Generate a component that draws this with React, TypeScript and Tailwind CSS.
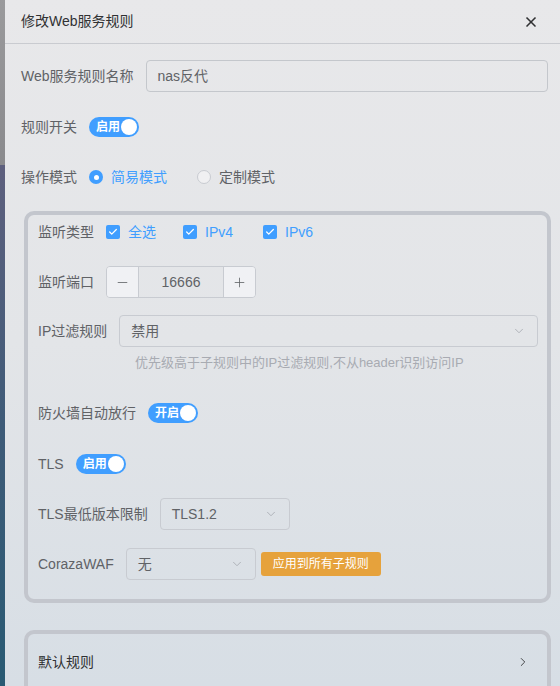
import { X, ChevronDown, ChevronRight, Minus, Plus, Check } from "lucide-react";

const font = { fontFamily: '"Liberation Sans", "Noto Sans CJK SC", sans-serif' };

function Switch({ text }: { text: string }) {
  return (
    <div className="flex items-center justify-between w-[50px] h-[20px] rounded-full bg-[#409eff] pl-[7px] pr-[2px]">
      <span className="text-[12px] font-bold text-white leading-none">{text}</span>
      <span className="w-[16px] h-[16px] rounded-full bg-white"></span>
    </div>
  );
}

function CheckBox({ label, ml }: { label: string; ml: string }) {
  return (
    <div className={`flex items-center ${ml}`}>
      <span className="w-[14px] h-[14px] rounded-[2px] bg-[#409eff] flex items-center justify-center">
        <Check size={10} strokeWidth={3} className="text-white" />
      </span>
      <span className="ml-[8px] text-[14px] text-[#409eff]">{label}</span>
    </div>
  );
}

function Select({ value, w }: { value: string; w: string }) {
  return (
    <div className={`flex items-center justify-between h-[32px] ${w} border border-[#c8cbd1] rounded-[4px] pl-[11px] pr-[11px]`}>
      <span className="text-[14px] text-[#606266]">{value}</span>
      <ChevronDown size={14} strokeWidth={1.5} className="text-[#a8abb2]" />
    </div>
  );
}

function Label({ children }: { children: string }) {
  return <span className="text-[14px] text-[#606266] whitespace-nowrap">{children}</span>;
}

export default function App() {
  return (
    <div className="flex w-[560px] h-[686px] overflow-hidden" style={font}>
      <div className="w-[5px] h-full flex flex-col shrink-0">
        <div className="h-[165px] bg-gradient-to-b from-[#9a9a9c] to-[#8a8a8d]"></div>
        <div className="flex-1 bg-gradient-to-b from-[#5e607e] via-[#3e5b78] to-[#285a73]"></div>
      </div>
      <div className="flex-1 flex flex-col bg-gradient-to-b from-[#e8e8ea] via-[#e3e5e8] to-[#d7dee5]">
        <div className="h-[44px] shrink-0 flex items-center justify-between pl-[16px] pr-[21px] border-b border-[#c9cbd0]">
          <span className="text-[14px] text-[#303133]">修改Web服务规则</span>
          <X size={16} strokeWidth={2.5} className="text-[#303133]" />
        </div>

        <div className="flex flex-col pl-[16px] pr-[12px]">
          <div className="flex items-center h-[32px] mt-[16px]">
            <Label>Web服务规则名称</Label>
            <div className="ml-[12px] flex-1 h-[32px] border border-[#c4c7cc] rounded-[4px] flex items-center pl-[11px]">
              <span className="text-[14px] text-[#606266]">nas反代</span>
            </div>
          </div>

          <div className="flex items-center h-[32px] mt-[19px]">
            <Label>规则开关</Label>
            <div className="ml-[12px]">
              <Switch text="启用" />
            </div>
          </div>

          <div className="flex items-center h-[32px] mt-[18px]">
            <Label>操作模式</Label>
            <span className="ml-[12px] w-[14px] h-[14px] rounded-full bg-[#409eff] flex items-center justify-center">
              <span className="w-[5px] h-[5px] rounded-full bg-white"></span>
            </span>
            <span className="ml-[8px] text-[14px] text-[#409eff]">简易模式</span>
            <span className="ml-[30px] w-[14px] h-[14px] rounded-full border border-[#c8cbd1] bg-[#f0f0f2]"></span>
            <span className="ml-[8px] text-[14px] text-[#606266]">定制模式</span>
          </div>

          <div className="mt-[18px] ml-[3px] mr-[-3px] border-4 border-[#c3c6cd] rounded-[10px] pl-[10px] pr-[9px] pt-[1px] pb-[19px] flex flex-col">
            <div className="flex items-center h-[32px]">
              <Label>监听类型</Label>
              <CheckBox label="全选" ml="ml-[12px]" />
              <CheckBox label="IPv4" ml="ml-[27px]" />
              <CheckBox label="IPv6" ml="ml-[30px]" />
            </div>

            <div className="flex items-center h-[32px] mt-[18px]">
              <Label>监听端口</Label>
              <div className="ml-[12px] flex h-[32px] w-[150px] border border-[#c8cbd1] rounded-[4px] overflow-hidden">
                <div className="w-[32px] flex items-center justify-center bg-[#f0f1f4] border-r border-[#c8cbd1]">
                  <Minus size={15} strokeWidth={1.3} className="text-[#606266]" />
                </div>
                <div className="flex-1 flex items-center justify-center text-[14px] text-[#606266]">16666</div>
                <div className="w-[32px] flex items-center justify-center bg-[#f0f1f4] border-l border-[#c8cbd1]">
                  <Plus size={15} strokeWidth={1.3} className="text-[#606266]" />
                </div>
              </div>
            </div>

            <div className="flex items-center h-[32px] mt-[17px]">
              <Label>IP过滤规则</Label>
              <div className="ml-[12px] flex-1">
                <Select value="禁用" w="w-full" />
              </div>
            </div>

            <div className="h-[20px] mt-[6px] pl-[97px] text-[13px] leading-[20px] text-[#a8abb2] whitespace-nowrap">
              优先级高于子规则中的IP过滤规则,不从header识别访问IP
            </div>

            <div className="flex items-center h-[32px] mt-[24px]">
              <Label>防火墙自动放行</Label>
              <div className="ml-[12px]">
                <Switch text="开启" />
              </div>
            </div>

            <div className="flex items-center h-[32px] mt-[19px]">
              <Label>TLS</Label>
              <div className="ml-[12px]">
                <Switch text="启用" />
              </div>
            </div>

            <div className="flex items-center h-[32px] mt-[18px]">
              <Label>TLS最低版本限制</Label>
              <div className="ml-[12px]">
                <Select value="TLS1.2" w="w-[130px]" />
              </div>
            </div>

            <div className="flex items-center h-[32px] mt-[18px]">
              <Label>CorazaWAF</Label>
              <div className="ml-[12px]">
                <Select value="无" w="w-[130px]" />
              </div>
              <div className="ml-[5px] h-[24px] px-[12px] rounded-[3px] bg-[#e6a23c] flex items-center text-[12px] text-white">
                应用到所有子规则
              </div>
            </div>
          </div>

          <div className="mt-[27px] ml-[3px] mr-[-3px] h-[80px] border-4 border-[#c3c6cd] rounded-[10px] pl-[10px] pr-[17px] pt-[12px]">
            <div className="flex items-center justify-between h-[32px]">
              <span className="text-[14px] text-[#303133]">默认规则</span>
              <ChevronRight size={14} strokeWidth={1.5} className="text-[#303133]" />
            </div>
          </div>
        </div>
      </div>
    </div>
  );
}
